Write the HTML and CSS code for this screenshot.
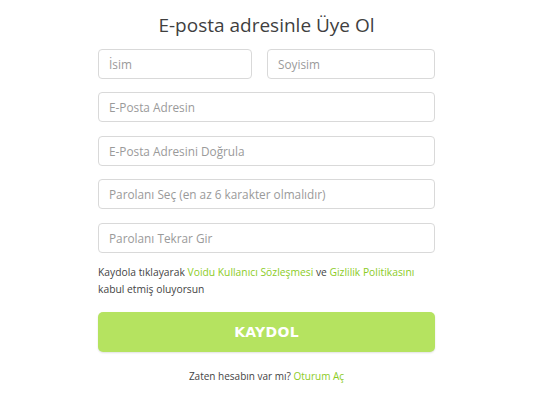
FILE: index.html
```html
<!DOCTYPE html>
<html lang="tr">
<head>
<meta charset="utf-8">
<link rel="stylesheet" href="styles.css">
</head>
<body>
<div class="page">
  <h1 class="title">E-posta adresinle Üye Ol</h1>
  <form class="form">
    <div class="row">
      <input class="field" type="text" placeholder="İsim">
      <input class="field" type="text" placeholder="Soyisim">
    </div>
    <input class="field" type="text" placeholder="E-Posta Adresin">
    <input class="field" type="text" placeholder="E-Posta Adresini Doğrula">
    <input class="field" type="password" placeholder="Parolanı Seç (en az 6 karakter olmalıdır)">
    <input class="field" type="password" placeholder="Parolanı Tekrar Gir">
    <p class="terms">Kaydola tıklayarak <a class="link">Voidu Kullanıcı Sözleşmesi</a> ve <a class="link">Gizlilik Politikasını</a><br>kabul etmiş oluyorsun</p>
    <button class="submit" type="button">KAYDOL</button>
    <p class="login">Zaten hesabın var mı? <a class="link">Oturum Aç</a></p>
  </form>
</div>
</body>
</html>
```
FILE: styles.css
```css
* { box-sizing: border-box; }
html, body { margin: 0; padding: 0; background: #fff; }
body { font-family: "Open Sans", "DejaVu Sans", sans-serif; color: #444; }
.page { width: 337px; margin: 0 auto; padding-top: 12px; position: relative; left: -0.5px; }
.title { margin: 0; font-size: 19px; font-weight: 400; text-align: center; color: #3f3f3f; line-height: 26px; height: 37px; }
.form { display: flex; flex-direction: column; gap: 13.4px; }
.row { display: flex; gap: 15px; }
.row .field:first-child { width: 154px; }
.row .field:last-child { flex: 1; }
.field { width: 100%; height: 30px; border: 1px solid #d9d9d9; border-radius: 4px; padding: 0 10px; font-family: inherit; font-size: 11.8px; color: #444; background: #fff; outline: none; }
.field::placeholder { color: #9a9a9a; }
.terms { margin: -2px 0 0; font-size: 10.3px; line-height: 17px; color: #444; }
.link { color: #8ccc1f; text-decoration: none; }
.submit { margin-top: 1px; height: 40px; width: 100%; border: none; border-radius: 5px; background: #b5e360; color: #fff; font-family: "DejaVu Sans", sans-serif; font-weight: 700; font-size: 14px; letter-spacing: 0.3px; box-shadow: 0 1px 2px rgba(0,0,0,0.12); }
.login { margin: 3px 0 0; text-align: center; font-size: 10px; color: #444; }
```
